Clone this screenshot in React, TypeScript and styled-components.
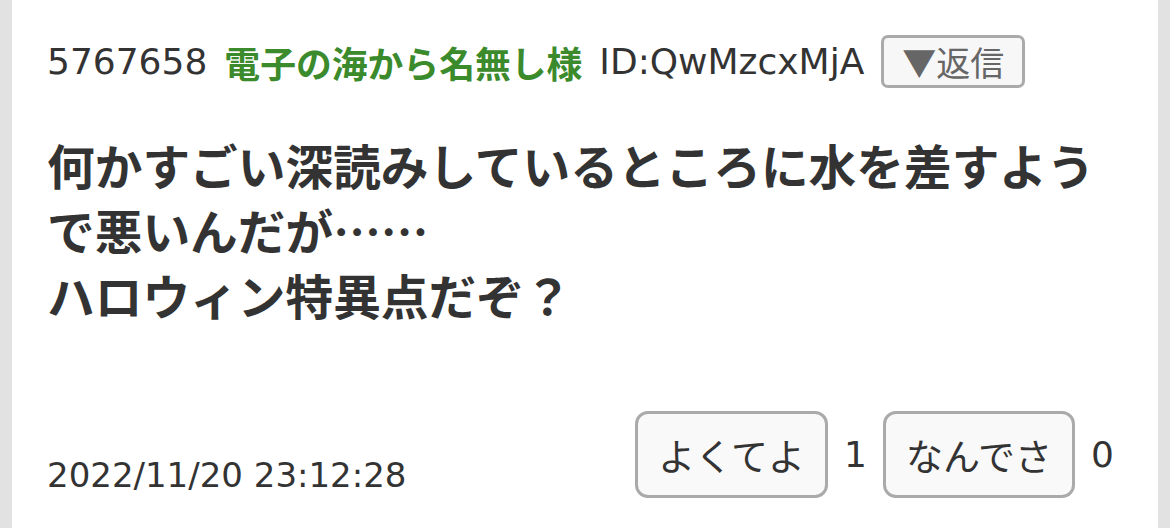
import React from 'react';
import styled, { createGlobalStyle } from 'styled-components';

const GlobalStyle = createGlobalStyle`
  html, body {
    margin: 0;
    padding: 0;
    background: #e2e2e2;
  }
  body {
    font-family: "DejaVu Sans", "Noto Sans CJK JP", sans-serif;
    color: #333;
  }
`;

const Page = styled.div`
  width: 1170px;
  height: 528px;
  padding: 0 12px;
  box-sizing: border-box;
  background: #e2e2e2;
  overflow: hidden;
`;

const Card = styled.article`
  height: 100%;
  background: #fff;
  padding: 35px 35px 0 35px;
  box-sizing: border-box;
  display: flex;
  flex-direction: column;
`;

const Header = styled.div`
  display: flex;
  align-items: center;
  gap: 17px;
  font-size: 36px;
  height: 53px;
`;

const Num = styled.span`
  color: #333;
`;

const Name = styled.span`
  color: #3b8a2c;
  font-weight: bold;
  font-size: 35.8px;
  font-family: "Noto Sans CJK JP", sans-serif;
`;

const Id = styled.span`
  color: #333;
`;

const ReplyButton = styled.button`
  font-family: "Noto Sans CJK JP", sans-serif;
  font-size: 34px;
  color: #666;
  background: #f7f7f7;
  border: 3px solid #aaa;
  border-radius: 7px;
  height: 53px;
  padding: 0 18px;
  display: flex;
  align-items: center;
`;

const Body = styled.p`
  margin: 44px 0 0;
  font-family: "Noto Sans CJK JP", sans-serif;
  font-weight: bold;
  font-size: 47.7px;
  line-height: 65px;
  color: #333;
`;

const Footer = styled.div`
  margin-top: auto;
  margin-bottom: 30px;
  display: flex;
  justify-content: space-between;
  align-items: flex-end;
`;

const Date = styled.span`
  font-size: 34px;
  margin-bottom: 3px;
`;

const Votes = styled.div`
  display: flex;
  align-items: center;
  margin-right: -7px;
`;

const VoteButton = styled.button`
  font-family: "Noto Sans CJK JP", sans-serif;
  font-size: 37px;
  color: #333;
  background: #f9f9f9;
  border: 3px solid #aaa;
  border-radius: 13px;
  height: 87px;
  padding: 0 20px;
`;

const Count = styled.span`
  font-size: 36px;
  color: #333;
  padding: 0 16px;
`;

export default function App() {
  return (
    <>
      <GlobalStyle />
      <Page>
        <Card>
          <Header>
            <Num>5767658</Num>
            <Name>電子の海から名無し様</Name>
            <Id>ID:QwMzcxMjA</Id>
            <ReplyButton>▼返信</ReplyButton>
          </Header>
          <Body>
            何かすごい深読みしているところに水を差すようで悪いんだが……
            <br />
            ハロウィン特異点だぞ？
          </Body>
          <Footer>
            <Date>2022/11/20 23:12:28</Date>
            <Votes>
              <VoteButton>よくてよ</VoteButton>
              <Count>1</Count>
              <VoteButton>なんでさ</VoteButton>
              <Count>0</Count>
            </Votes>
          </Footer>
        </Card>
      </Page>
    </>
  );
}
